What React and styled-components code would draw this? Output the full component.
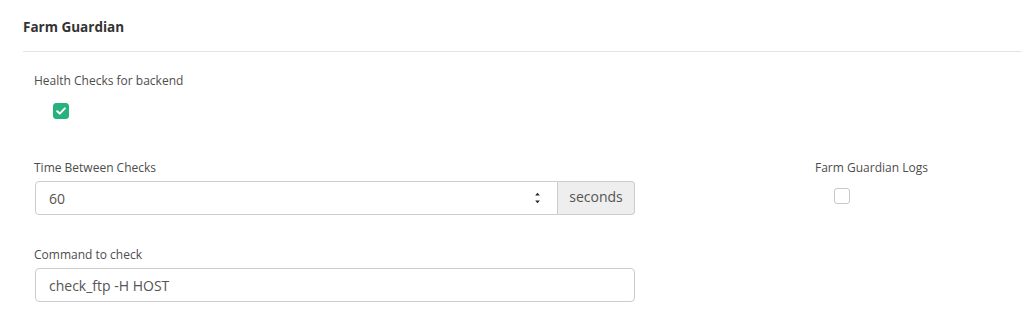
import React from "react";
import styled, { createGlobalStyle } from "styled-components";

const Global = createGlobalStyle`
  html, body { margin: 0; padding: 0; background: #fff; }
  body { font-family: "Open Sans", "Liberation Sans", sans-serif; color: #444; }
  * { box-sizing: border-box; }
`;

const Page = styled.div`
  width: 1021px;
  height: 324px;
  overflow: hidden;
  background: #fff;
`;

const Header = styled.div`
  margin-left: 23px;
  height: 52px;
  padding-top: 18px;
  border-bottom: 1px solid #e3e3e3;
`;

const Title = styled.h2`
  margin: 0;
  font-size: 13.5px;
  line-height: 18px;
  font-weight: 700;
  color: #333;
`;

const Form = styled.div`
  padding: 20px 0 0 35px;
  display: flex;
  flex-direction: column;
`;

const Row = styled.div`
  display: grid;
  grid-template-columns: 600px 1fr;
  column-gap: 181px;
  margin-top: ${(p) => p.$top || 0}px;
`;

const Field = styled.div`
  display: flex;
  flex-direction: column;
  align-items: flex-start;
`;

const Label = styled.label`
  font-size: 12px;
  line-height: 17px;
  color: #4d4d4d;
  margin-left: -1px;
`;

const Check = styled.span`
  width: 16px;
  height: 16px;
  margin: ${(p) => p.$mt}px 0 0 18px;
  border-radius: 3px;
  display: flex;
  align-items: center;
  justify-content: center;
  background: ${(p) => (p.$checked ? "#26b27c" : "#fff")};
  border: 1px solid ${(p) => (p.$checked ? "#26b27c" : "#c8c8c8")};
`;

const Group = styled.div`
  display: flex;
  width: 600px;
  height: 34px;
  margin-top: 5px;
`;

const Box = styled.div`
  flex: 1;
  display: flex;
  align-items: center;
  border: 1px solid #ccc;
  border-radius: ${(p) => (p.$addon ? "4px 0 0 4px" : "4px")};
  padding: 0 16px 0 13px;
  background: #fff;
`;

const Input = styled.input`
  flex: 1;
  min-width: 0;
  border: none;
  outline: none;
  padding: 0;
  font-family: inherit;
  font-size: 14px;
  color: #555;
  background: transparent;
`;

const Addon = styled.span`
  width: 77px;
  display: flex;
  align-items: center;
  justify-content: center;
  padding-bottom: 3px;
  border: 1px solid #ccc;
  border-left: none;
  border-radius: 0 4px 4px 0;
  background: #eee;
  color: #555;
  font-size: 14px;
`;

const Spinner = () => (
  <svg width="7" height="14" viewBox="0 0 7 14">
    <path d="M1.2 4.5 L3.5 1.8 L5.8 4.5 Z" fill="#222" />
    <path d="M1.2 9.5 L3.5 12.2 L5.8 9.5 Z" fill="#222" />
  </svg>
);

const Tick = () => (
  <svg width="10" height="8" viewBox="0 0 10 8">
    <path d="M1.2 4.2 L3.8 6.6 L8.8 1.4" fill="none" stroke="#fff" strokeWidth="2" strokeLinecap="round" strokeLinejoin="round" />
  </svg>
);

export default function App() {
  return (
    <Page>
      <Global />
      <Header>
        <Title>Farm Guardian</Title>
      </Header>
      <Form>
        <Field>
          <Label>Health Checks for backend</Label>
          <Check $checked $mt={14}>
            <Tick />
          </Check>
        </Field>
        <Row $top={40}>
          <Field>
            <Label>Time Between Checks</Label>
            <Group>
              <Box $addon>
                <Input defaultValue="60" />
                <Spinner />
              </Box>
              <Addon>seconds</Addon>
            </Group>
          </Field>
          <Field>
            <Label>Farm Guardian Logs</Label>
            <Check $mt={12} />
          </Field>
        </Row>
        <Row $top={31}>
          <Field>
            <Label>Command to check</Label>
            <Group>
              <Box>
                <Input defaultValue="check_ftp -H HOST" />
              </Box>
            </Group>
          </Field>
        </Row>
      </Form>
    </Page>
  );
}
